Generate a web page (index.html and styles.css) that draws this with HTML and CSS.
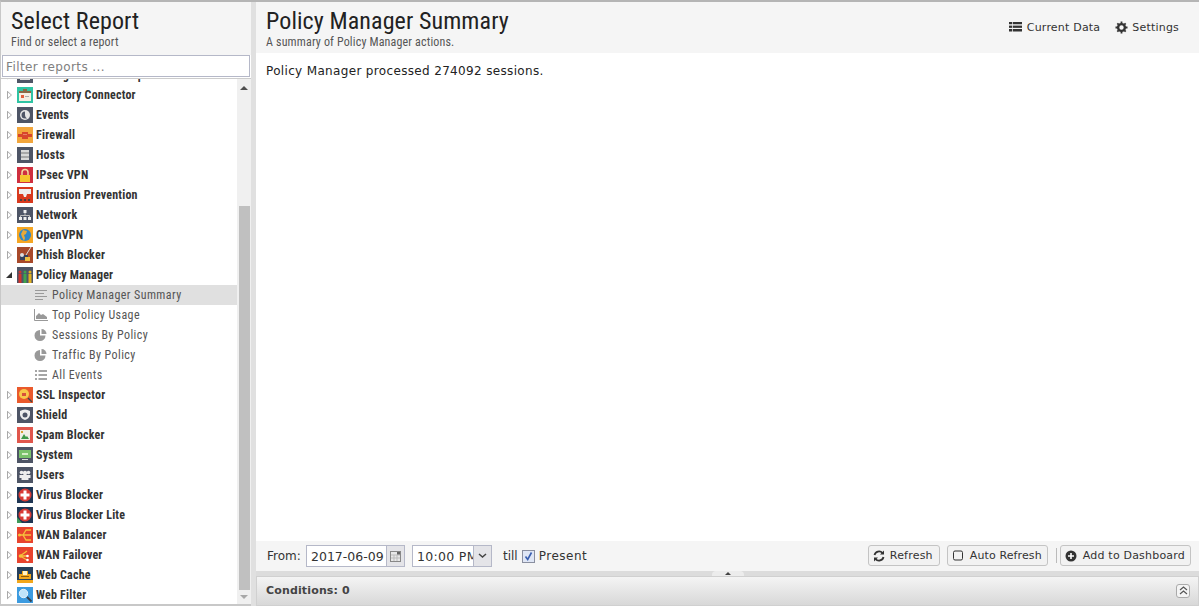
FILE: index.html
```html
<!DOCTYPE html>
<html lang="en">
<head>
    <meta charset="UTF-8">
    <title>Reports</title>
    <link rel="stylesheet" href="styles.css">
</head>
<body>
    <svg class="defs" width="0" height="0">
        <symbol id="i-backup" viewBox="0 0 16 16"><rect width="16" height="16" fill="#4e5566"/><rect x="3" y="3" width="10" height="10" fill="#ddd"/></symbol>
        <symbol id="i-directory" viewBox="0 0 16 16"><rect width="16" height="16" fill="#2fc4a4"/><rect x="2" y="4" width="12" height="10" fill="#f4efe2"/><rect x="2" y="4" width="12" height="2" fill="#8a6a45"/><rect x="6" y="2" width="4" height="3" fill="#8a6a45"/><rect x="4" y="8" width="3" height="3" fill="#e2603c"/><rect x="8" y="9" width="4" height="1" fill="#aaa"/></symbol>
        <symbol id="i-events" viewBox="0 0 16 16"><rect width="16" height="16" fill="#4e5566"/><circle cx="8" cy="8" r="5" fill="#e6e6e6"/><path d="M8 4.500a3.500 3.500 0 0 0 0 7h2a4 4 0 0 1-2-3.500z" fill="#4e5566"/></symbol>
        <symbol id="i-firewall" viewBox="0 0 16 16"><rect width="16" height="16" fill="#f2a63c"/><rect x="1" y="7" width="14" height="3" fill="#d8452c"/><rect x="5" y="5" width="6" height="7" fill="#d8452c"/><rect x="6" y="7" width="4" height="1" fill="#e8806a"/></symbol>
        <symbol id="i-hosts" viewBox="0 0 16 16"><rect width="16" height="16" fill="#4e5566"/><rect x="4" y="3" width="8" height="10" fill="#d8d8d8"/><path d="M4 6h8M4 10h8" stroke="#777"/></symbol>
        <symbol id="i-ipsec" viewBox="0 0 16 16"><rect width="16" height="16" fill="#cf2f3f"/><path d="M5 8V5.500a3 3 0 0 1 6 0V8" fill="none" stroke="#f3d9a0" stroke-width="1.500"/><rect x="3" y="8" width="10" height="7" fill="#f6c52c"/></symbol>
        <symbol id="i-ips" viewBox="0 0 16 16"><rect width="16" height="16" fill="#d93a1e"/><rect x="2" y="2" width="12" height="5" fill="#eee"/><path d="M6 7h4l-1 3H7z" fill="#eee"/><rect x="3" y="12" width="2" height="2" fill="#444"/><rect x="7" y="12" width="2" height="2" fill="#444"/><rect x="11" y="12" width="2" height="2" fill="#444"/></symbol>
        <symbol id="i-network" viewBox="0 0 16 16"><rect width="16" height="16" fill="#4e5566"/><rect x="6.500" y="3" width="3" height="3" fill="#eee"/><path d="M8 6v3M3.500 10V8.500h9V10" fill="none" stroke="#bbb"/><rect x="2" y="10" width="3" height="3" fill="#eee"/><rect x="6.500" y="10" width="3" height="3" fill="#eee"/><rect x="11" y="10" width="3" height="3" fill="#eee"/></symbol>
        <symbol id="i-openvpn" viewBox="0 0 16 16"><rect width="16" height="16" fill="#f5a623"/><circle cx="8" cy="8" r="6" fill="#2f86c8"/><path d="M6 3l4 1-1 3-2 1 1 3-1 3-2-4-1-3z" fill="#e8a93a"/></symbol>
        <symbol id="i-phish" viewBox="0 0 16 16"><rect width="16" height="16" fill="#a8492a"/><path d="M14 0L9 8" stroke="#ddd"/><rect x="3" y="8" width="8" height="5" fill="#33415c"/><rect x="8" y="10" width="5" height="4" fill="#f0c040"/><circle cx="5" cy="8" r="2" fill="#ddd"/></symbol>
        <symbol id="i-policy" viewBox="0 0 16 16"><rect width="16" height="16" fill="#4e5566"/><rect x="1.500" y="7" width="3" height="9" fill="#d0332c"/><rect x="6.500" y="7" width="3" height="9" fill="#3fa34d"/><rect x="11.500" y="7" width="3" height="9" fill="#e0b020"/><circle cx="3" cy="5" r="1.500" fill="#d0332c"/><circle cx="8" cy="5" r="1.500" fill="#3fa34d"/><circle cx="13" cy="5" r="1.500" fill="#e0b020"/></symbol>
        <symbol id="i-ssl" viewBox="0 0 16 16"><rect width="16" height="16" fill="#ea5a2c"/><circle cx="7" cy="7" r="5" fill="#f7c84a"/><rect x="5" y="6" width="4" height="3" fill="#d8503a"/><path d="M11 11l4 4" stroke="#444" stroke-width="1.500"/></symbol>
        <symbol id="i-shield" viewBox="0 0 16 16"><rect width="16" height="16" fill="#4e5566"/><path d="M3 4q5-3 10 0v4q-1 4-5 5-4-1-5-5z" fill="#eee"/><circle cx="8" cy="8" r="2.500" fill="#4e5566"/></symbol>
        <symbol id="i-spam" viewBox="0 0 16 16"><rect width="16" height="16" fill="#e0564c"/><rect x="3" y="3" width="10" height="10" fill="#f2efe6"/><path d="M4 12l3-5 2 3 1-1 2 3z" fill="#3f9a4a"/><rect x="4" y="4" width="2" height="2" fill="#d8a030"/></symbol>
        <symbol id="i-system" viewBox="0 0 16 16"><rect width="16" height="16" fill="#4e5566"/><rect x="2" y="3" width="12" height="8" fill="#7ac26c"/><rect x="5" y="6" width="6" height="2" fill="#d6efc8"/><rect x="5" y="12" width="6" height="1" fill="#ddd"/></symbol>
        <symbol id="i-users" viewBox="0 0 16 16"><rect width="16" height="16" fill="#4e5566"/><circle cx="4.500" cy="5.500" r="1.800" fill="#eee"/><circle cx="11.500" cy="5.500" r="1.800" fill="#eee"/><circle cx="8" cy="6" r="2.200" fill="#eee"/><path d="M2.500 8h11v3h-2v2h-7v-2h-2z" fill="#eee"/></symbol>
        <symbol id="i-virus" viewBox="0 0 16 16"><rect width="16" height="16" fill="#1f3654"/><circle cx="8" cy="8" r="6.500" fill="#d83a34"/><rect x="3.500" y="6.500" width="9" height="3" fill="#fff"/><rect x="6.500" y="3.500" width="3" height="9" fill="#fff"/></symbol>
        <symbol id="i-viruslite" viewBox="0 0 16 16"><rect width="16" height="16" fill="#1f3654"/><path d="M0 10l5 6H0z" fill="#3f9a5a"/><circle cx="8" cy="8" r="6.500" fill="#d83a34"/><rect x="3.500" y="6.500" width="9" height="3" fill="#fff"/><rect x="6.500" y="3.500" width="3" height="9" fill="#fff"/></symbol>
        <symbol id="i-balancer" viewBox="0 0 16 16"><rect width="16" height="16" fill="#e8442e"/><path d="M2 8h5M14 3H9L6 8l3 5h5M7 8h7" fill="none" stroke="#f6c13c" stroke-width="1.300"/><circle cx="2.500" cy="8" r="1.500" fill="#f6c13c"/></symbol>
        <symbol id="i-failover" viewBox="0 0 16 16"><rect width="16" height="16" fill="#e8442e"/><path d="M3 9l7-5M3 9h7M3 9l7 4" fill="none" stroke="#f6c13c" stroke-width="1.300"/><circle cx="3.500" cy="9" r="1.800" fill="#f6c13c"/><circle cx="10.500" cy="9" r="1.300" fill="#fff"/><circle cx="10.500" cy="13" r="1.300" fill="#fff"/></symbol>
        <symbol id="i-cache" viewBox="0 0 16 16"><rect width="16" height="16" fill="#26405c"/><rect y="13" width="16" height="3" fill="#f2a71c"/><path d="M2 7h3V4h6v3h3v5H2z" fill="#f2a71c"/><rect x="6" y="4" width="4" height="4" fill="#fff3c8"/><rect x="4" y="9" width="8" height="1" fill="#8a5a10"/></symbol>
        <symbol id="i-filter" viewBox="0 0 16 16"><rect width="16" height="16" fill="#3c9be0"/><circle cx="6.500" cy="6.500" r="4.200" fill="#bfe4fa" stroke="#e6f4fc"/><path d="M10 10l4.500 4.500" stroke="#33414f" stroke-width="1.800"/></symbol>
        <symbol id="i-text" viewBox="0 0 14 14"><path d="M1 2.500h12M1 5.500h9M1 8.500h12M1 11.500h8" stroke="#999" stroke-width="1.200"/></symbol>
        <symbol id="i-area" viewBox="0 0 14 14"><path d="M.5 1v11.500H14" fill="none" stroke="#999"/><path d="M2 11V8l3-3 2 2 2-1 4 3v2z" fill="#999"/></symbol>
        <symbol id="i-pie" viewBox="0 0 14 14"><path d="M6 2a5.500 5.500 0 1 0 5.500 5.500H6z" fill="#999"/><path d="M7.500 1v5h5a5 5 0 0 0-5-5z" fill="#999"/></symbol>
        <symbol id="i-list" viewBox="0 0 14 14"><path d="M1 3h2M1 7h2M1 11h2M4.500 3H13M4.500 7H13M4.500 11H13" stroke="#888" stroke-width="1.300"/></symbol>
    </svg>

    <div class="app">
        <aside class="side">
            <div class="head side-head">
                <h1>Select Report</h1>
                <p>Find or select a report</p>
            </div>
            <input class="filter" type="text" placeholder="Filter reports ...">
            <div class="tree-wrap">
                <ul class="tree">
                    <li class="app-row"><i class="arrow"></i><svg class="ico"><use href="#i-backup"/></svg><span>Configuration Backup</span></li>
                    <li class="app-row"><i class="arrow"></i><svg class="ico"><use href="#i-directory"/></svg><span>Directory Connector</span></li>
                    <li class="app-row"><i class="arrow"></i><svg class="ico"><use href="#i-events"/></svg><span>Events</span></li>
                    <li class="app-row"><i class="arrow"></i><svg class="ico"><use href="#i-firewall"/></svg><span>Firewall</span></li>
                    <li class="app-row"><i class="arrow"></i><svg class="ico"><use href="#i-hosts"/></svg><span>Hosts</span></li>
                    <li class="app-row"><i class="arrow"></i><svg class="ico"><use href="#i-ipsec"/></svg><span>IPsec VPN</span></li>
                    <li class="app-row"><i class="arrow"></i><svg class="ico"><use href="#i-ips"/></svg><span>Intrusion Prevention</span></li>
                    <li class="app-row"><i class="arrow"></i><svg class="ico"><use href="#i-network"/></svg><span>Network</span></li>
                    <li class="app-row"><i class="arrow"></i><svg class="ico"><use href="#i-openvpn"/></svg><span>OpenVPN</span></li>
                    <li class="app-row"><i class="arrow"></i><svg class="ico"><use href="#i-phish"/></svg><span>Phish Blocker</span></li>
                    <li class="app-row"><i class="arrow open"></i><svg class="ico"><use href="#i-policy"/></svg><span>Policy Manager</span></li>
                    <li class="sub-row selected"><svg class="sub-ico"><use href="#i-text"/></svg><span>Policy Manager Summary</span></li>
                    <li class="sub-row"><svg class="sub-ico"><use href="#i-area"/></svg><span>Top Policy Usage</span></li>
                    <li class="sub-row"><svg class="sub-ico"><use href="#i-pie"/></svg><span>Sessions By Policy</span></li>
                    <li class="sub-row"><svg class="sub-ico"><use href="#i-pie"/></svg><span>Traffic By Policy</span></li>
                    <li class="sub-row"><svg class="sub-ico"><use href="#i-list"/></svg><span>All Events</span></li>
                    <li class="app-row"><i class="arrow"></i><svg class="ico"><use href="#i-ssl"/></svg><span>SSL Inspector</span></li>
                    <li class="app-row"><i class="arrow"></i><svg class="ico"><use href="#i-shield"/></svg><span>Shield</span></li>
                    <li class="app-row"><i class="arrow"></i><svg class="ico"><use href="#i-spam"/></svg><span>Spam Blocker</span></li>
                    <li class="app-row"><i class="arrow"></i><svg class="ico"><use href="#i-system"/></svg><span>System</span></li>
                    <li class="app-row"><i class="arrow"></i><svg class="ico"><use href="#i-users"/></svg><span>Users</span></li>
                    <li class="app-row"><i class="arrow"></i><svg class="ico"><use href="#i-virus"/></svg><span>Virus Blocker</span></li>
                    <li class="app-row"><i class="arrow"></i><svg class="ico"><use href="#i-viruslite"/></svg><span>Virus Blocker Lite</span></li>
                    <li class="app-row"><i class="arrow"></i><svg class="ico"><use href="#i-balancer"/></svg><span>WAN Balancer</span></li>
                    <li class="app-row"><i class="arrow"></i><svg class="ico"><use href="#i-failover"/></svg><span>WAN Failover</span></li>
                    <li class="app-row"><i class="arrow"></i><svg class="ico"><use href="#i-cache"/></svg><span>Web Cache</span></li>
                    <li class="app-row"><i class="arrow"></i><svg class="ico"><use href="#i-filter"/></svg><span>Web Filter</span></li>
                </ul>
                <div class="scrollbar">
                    <i class="sb-up"></i>
                    <div class="sb-thumb"></div>
                    <i class="sb-down"></i>
                </div>
            </div>
        </aside>

        <main class="main">
            <div class="head main-head">
                <div>
                    <h1>Policy Manager Summary</h1>
                    <p>A summary of Policy Manager actions.</p>
                </div>
                <div class="head-links">
                    <a><svg width="13" height="13" viewBox="0 0 13 13"><path d="M0 1h13v2.500H0zM0 4.500h13V7H0zM0 8h13v2.500H0z" fill="#333"/><path d="M3.500 1v10M0 3.800h13M0 7.300h13" stroke="#f5f5f5" stroke-width=".7"/></svg>Current Data</a>
                    <a><svg width="13" height="13" viewBox="0 0 13 13"><circle cx="6.500" cy="6.500" r="3.400" fill="none" stroke="#333" stroke-width="2.400"/><path d="M6.500 .5v12M.5 6.500h12M2.300 2.300l8.400 8.400M10.700 2.300l-8.400 8.400" stroke="#333" stroke-width="1.800" stroke-dasharray="2 8"/></svg>Settings</a>
                </div>
            </div>

            <div class="report-body">Policy Manager processed 274092 sessions.</div>

            <div class="toolbar">
                <label class="from">From:</label>
                <div class="field date"><span>2017-06-09</span>
                    <b class="trigger"><svg width="11" height="11" viewBox="0 0 11 11"><rect x=".5" y=".5" width="10" height="10" fill="#e8e8e8" stroke="#888"/><path d="M1 4h9M4 4v6M7 4v6M1 7h9" stroke="#bbb"/><rect x="7" y="1" width="3" height="2.500" fill="#666"/></svg></b>
                </div>
                <div class="field time"><span>10:00 PM</span>
                    <b class="trigger"><svg width="9" height="6" viewBox="0 0 9 6"><path d="M1 1l3.500 3L8 1" fill="none" stroke="#444" stroke-width="1.500"/></svg></b>
                </div>
                <label class="till">till</label>
                <i class="check"><svg width="11" height="11" viewBox="0 0 11 11"><path d="M2.500 5.500l2.200 3L8.500 1.500" fill="none" stroke="#3a5fb0" stroke-width="1.600"/></svg></i>
                <label class="present">Present</label>
                <div class="buttons">
                    <button class="btn"><svg width="12" height="12" viewBox="0 0 12 12"><path d="M1.500 5a4.600 4.600 0 0 1 8-2M10.500 7a4.600 4.600 0 0 1-8 2" fill="none" stroke="#333" stroke-width="1.800"/><path d="M11 .5v4H7zM1 11.500v-4h4z" fill="#333"/></svg>Refresh</button>
                    <button class="btn btn-tight"><svg width="13" height="11" viewBox="0 0 13 11"><rect x="1.500" y="1" width="9" height="9" rx="1.500" fill="none" stroke="#333"/></svg>Auto Refresh</button>
                    <i class="sep"></i>
                    <button class="btn btn-add"><svg width="13" height="12" viewBox="0 0 13 12"><circle cx="6" cy="6" r="5.500" fill="#333"/><path d="M6 3v6M3 6h6" stroke="#fff" stroke-width="1.600"/></svg>Add to Dashboard</button>
                </div>
            </div>

            <div class="splitter"><i class="split-tab"></i></div>

            <div class="conditions">
                <strong>Conditions: 0</strong>
                <i class="collapse"><svg width="9" height="9" viewBox="0 0 9 9"><path d="M1 4l3.500-3L8 4M1 8l3.500-3L8 8" fill="none" stroke="#555" stroke-width="1.200"/></svg></i>
            </div>
        </main>
    </div>
</body>
</html>
```

FILE: styles.css
```css
html, body {
    margin: 0;
    padding: 0;
    height: 100%;
    overflow: hidden;
}

body {
    font-family: "DejaVu Sans", sans-serif;
    font-size: 12px;
    color: #333;
    background: #e0e0e0;
}

.defs {
    position: absolute;
}

.app {
    display: flex;
    height: 606px;
    box-sizing: border-box;
    border-top: 2px solid #b5b5b5;
    border-left: 1px solid #c8c8c8;
}

.side {
    width: 250px;
    display: flex;
    flex-direction: column;
    background: #fff;
}

.head {
    background: #f5f5f5;
}

.head h1 {
    margin: 0;
    font-family: Roboto, sans-serif;
    font-stretch: 75%;
    font-weight: 400;
    font-size: 24px;
    line-height: 28px;
    letter-spacing: .1px;
    color: #222;
}

.head p {
    margin: 0;
    font-family: Roboto, sans-serif;
    font-stretch: 75%;
    font-size: 12px;
    line-height: 14px;
    color: #555;
    letter-spacing: .16px;
}

.side-head {
    height: 53px;
    flex: none;
    box-sizing: border-box;
    padding: 5px 0 0 10px;
}

.filter {
    flex: none;
    height: 22px;
    box-sizing: border-box;
    margin: 0 0 0 1px;
    width: 248px;
    padding: 2px 3px 0;
    border: 1px solid #b5b8c8;
    font-family: "DejaVu Sans", sans-serif;
    font-size: 12px;
    letter-spacing: .4px;
    outline: none;
    border-radius: 0;
    background: #fff;
}

.filter::placeholder {
    color: #808080;
    opacity: 1;
}

.tree-wrap {
    flex: 1;
    display: flex;
    overflow: hidden;
    margin-top: 1px;
    border-top: 1px solid #ccc;
    border-bottom: 2px solid #c8c8c8;
}

.tree {
    flex: 1;
    list-style: none;
    margin: -14px 0 0;
    padding: 0;
    font-family: Roboto, sans-serif;
    font-stretch: 75%;
    font-size: 12px;
}

.tree li {
    height: 20px;
    display: flex;
    align-items: center;
}

.app-row {
    padding-left: 6px;
    font-weight: 700;
    color: #333;
    letter-spacing: .2px;
}

.sub-row {
    padding-left: 33px;
    color: #555;
    letter-spacing: .42px;
}

.sub-row.selected {
    background: #e0e0e0;
}

.arrow {
    margin-right: 5px;
    width: 5px;
    height: 9px;
    box-sizing: border-box;
    background: #aaa;
    clip-path: polygon(0 0, 100% 50%, 0 100%, 0 0, 1px 2px, 1px 7px, 4px 50%, 1px 2px);
}

.arrow.open {
    background: #333;
    width: 6px;
    height: 6px;
    margin-left: -1px;
    clip-path: polygon(100% 0, 100% 100%, 0 100%);
}

.ico {
    width: 16px;
    height: 16px;
    margin-right: 3px;
    flex: none;
}

.sub-ico {
    width: 14px;
    height: 14px;
    margin-right: 4px;
    flex: none;
}

.scrollbar {
    flex: none;
    width: 14px;
    background: #f0f0f0;
    display: flex;
    flex-direction: column;
    align-items: center;
    padding-top: 7px;
    box-sizing: border-box;
}

.sb-up, .sb-down {
    width: 0;
    height: 0;
    border-left: 4px solid transparent;
    border-right: 4px solid transparent;
}

.sb-up {
    border-bottom: 4px solid #505050;
}

.sb-down {
    border-top: 4px solid #a8a8a8;
    margin-top: 5px;
}

.sb-thumb {
    width: 11px;
    height: 384px;
    margin-top: 116px;
    background: #c0c0c0;
}

.main {
    flex: 1;
    margin-left: 5px;
    display: flex;
    flex-direction: column;
    min-width: 0;
}

.main-head {
    height: 51px;
    flex: none;
    box-sizing: border-box;
    padding: 5px 20px 0 10px;
    display: flex;
    justify-content: space-between;
}

.head-links {
    display: flex;
    gap: 15px;
    padding-top: 14px;
    font-size: 11px;
    letter-spacing: .2px;
}

.head-links a {
    display: flex;
    align-items: flex-start;
    gap: 5px;
    line-height: 14px;
}

.head-links a + a {
    gap: 4px;
}

.report-body {
    flex: 1;
    background: #fff;
    padding: 11px 10px 0;
    font-size: 12px;
    line-height: 15px;
    letter-spacing: .34px;
    color: #222;
}

.toolbar {
    height: 30px;
    flex: none;
    box-sizing: border-box;
    background: #f5f5f5;
    display: flex;
    align-items: center;
    padding: 0 8px 0 11px;
}

.from {
    width: 39px;
}

.field {
    height: 22px;
    box-sizing: border-box;
    border: 1px solid #b5b8c8;
    background: #fff;
    display: flex;
    align-items: center;
    overflow: hidden;
    padding-left: 4px;
    font-size: 12.500px;
}

.field span {
    flex: 1;
    overflow: hidden;
    white-space: nowrap;
}

.date {
    width: 99px;
}

.time {
    width: 80px;
    margin-left: 7px;
}

.time span {
    letter-spacing: .3px;
}

.trigger {
    flex: none;
    width: 17px;
    height: 20px;
    background: #e4e4e8;
    border-left: 1px solid #b5b8c8;
    display: flex;
    align-items: center;
    justify-content: center;
}

.till {
    margin-left: 11px;
}

.check {
    width: 13px;
    height: 13px;
    box-sizing: border-box;
    margin: 0 4px 0 4px;
    border: 1px solid #8a8fa0;
    background: #dfe6f5;
    display: flex;
    align-items: center;
    justify-content: center;
}

.present {
    letter-spacing: .5px;
}

.buttons {
    margin-left: auto;
    display: flex;
    align-items: center;
    padding-bottom: 1px;
}

.btn {
    height: 21px;
    box-sizing: border-box;
    margin: 0;
    padding: 0 6px 0 4px;
    border: 1px solid #c4c4c4;
    border-radius: 3px;
    background: #f2f2f2;
    font-family: "DejaVu Sans", sans-serif;
    font-size: 11px;
    letter-spacing: .2px;
    color: #333;
    display: flex;
    align-items: center;
    gap: 5px;
}

.btn + .btn {
    margin-left: 7px;
}

.btn-tight {
    padding-right: 5px;
    letter-spacing: .12px;
}

.btn-add {
    padding-right: 5px;
}

.sep {
    width: 1px;
    height: 15px;
    background: #bbb;
    margin: 0 3px 0 8px;
}

.btn svg {
    flex: none;
}

.sep + .btn {
    margin-left: 0;
}

.splitter {
    height: 5px;
    flex: none;
    display: flex;
    justify-content: center;
    background: #dcdcdc;
}

.split-tab {
    width: 32px;
    height: 5px;
    background: #ececec;
    border-radius: 4px 4px 0 0;
    display: flex;
    justify-content: center;
    align-items: center;
}

.split-tab::before {
    content: "";
    width: 0;
    height: 0;
    border-left: 3px solid transparent;
    border-right: 3px solid transparent;
    border-bottom: 3px solid #444;
}

.conditions {
    height: 30px;
    flex: none;
    box-sizing: border-box;
    border: 1px solid #d0d0d0;
    background: linear-gradient(#f4f4f4, #d8d8d8);
    display: flex;
    align-items: center;
    justify-content: space-between;
    padding: 0 8px 1px 9px;
    font-size: 11px;
    letter-spacing: .15px;
    color: #444;
}

.collapse {
    width: 14px;
    height: 14px;
    box-sizing: border-box;
    border: 1px solid #aaa;
    border-radius: 3px;
    background: #f4f4f4;
    display: flex;
    align-items: center;
    justify-content: center;
}
```
